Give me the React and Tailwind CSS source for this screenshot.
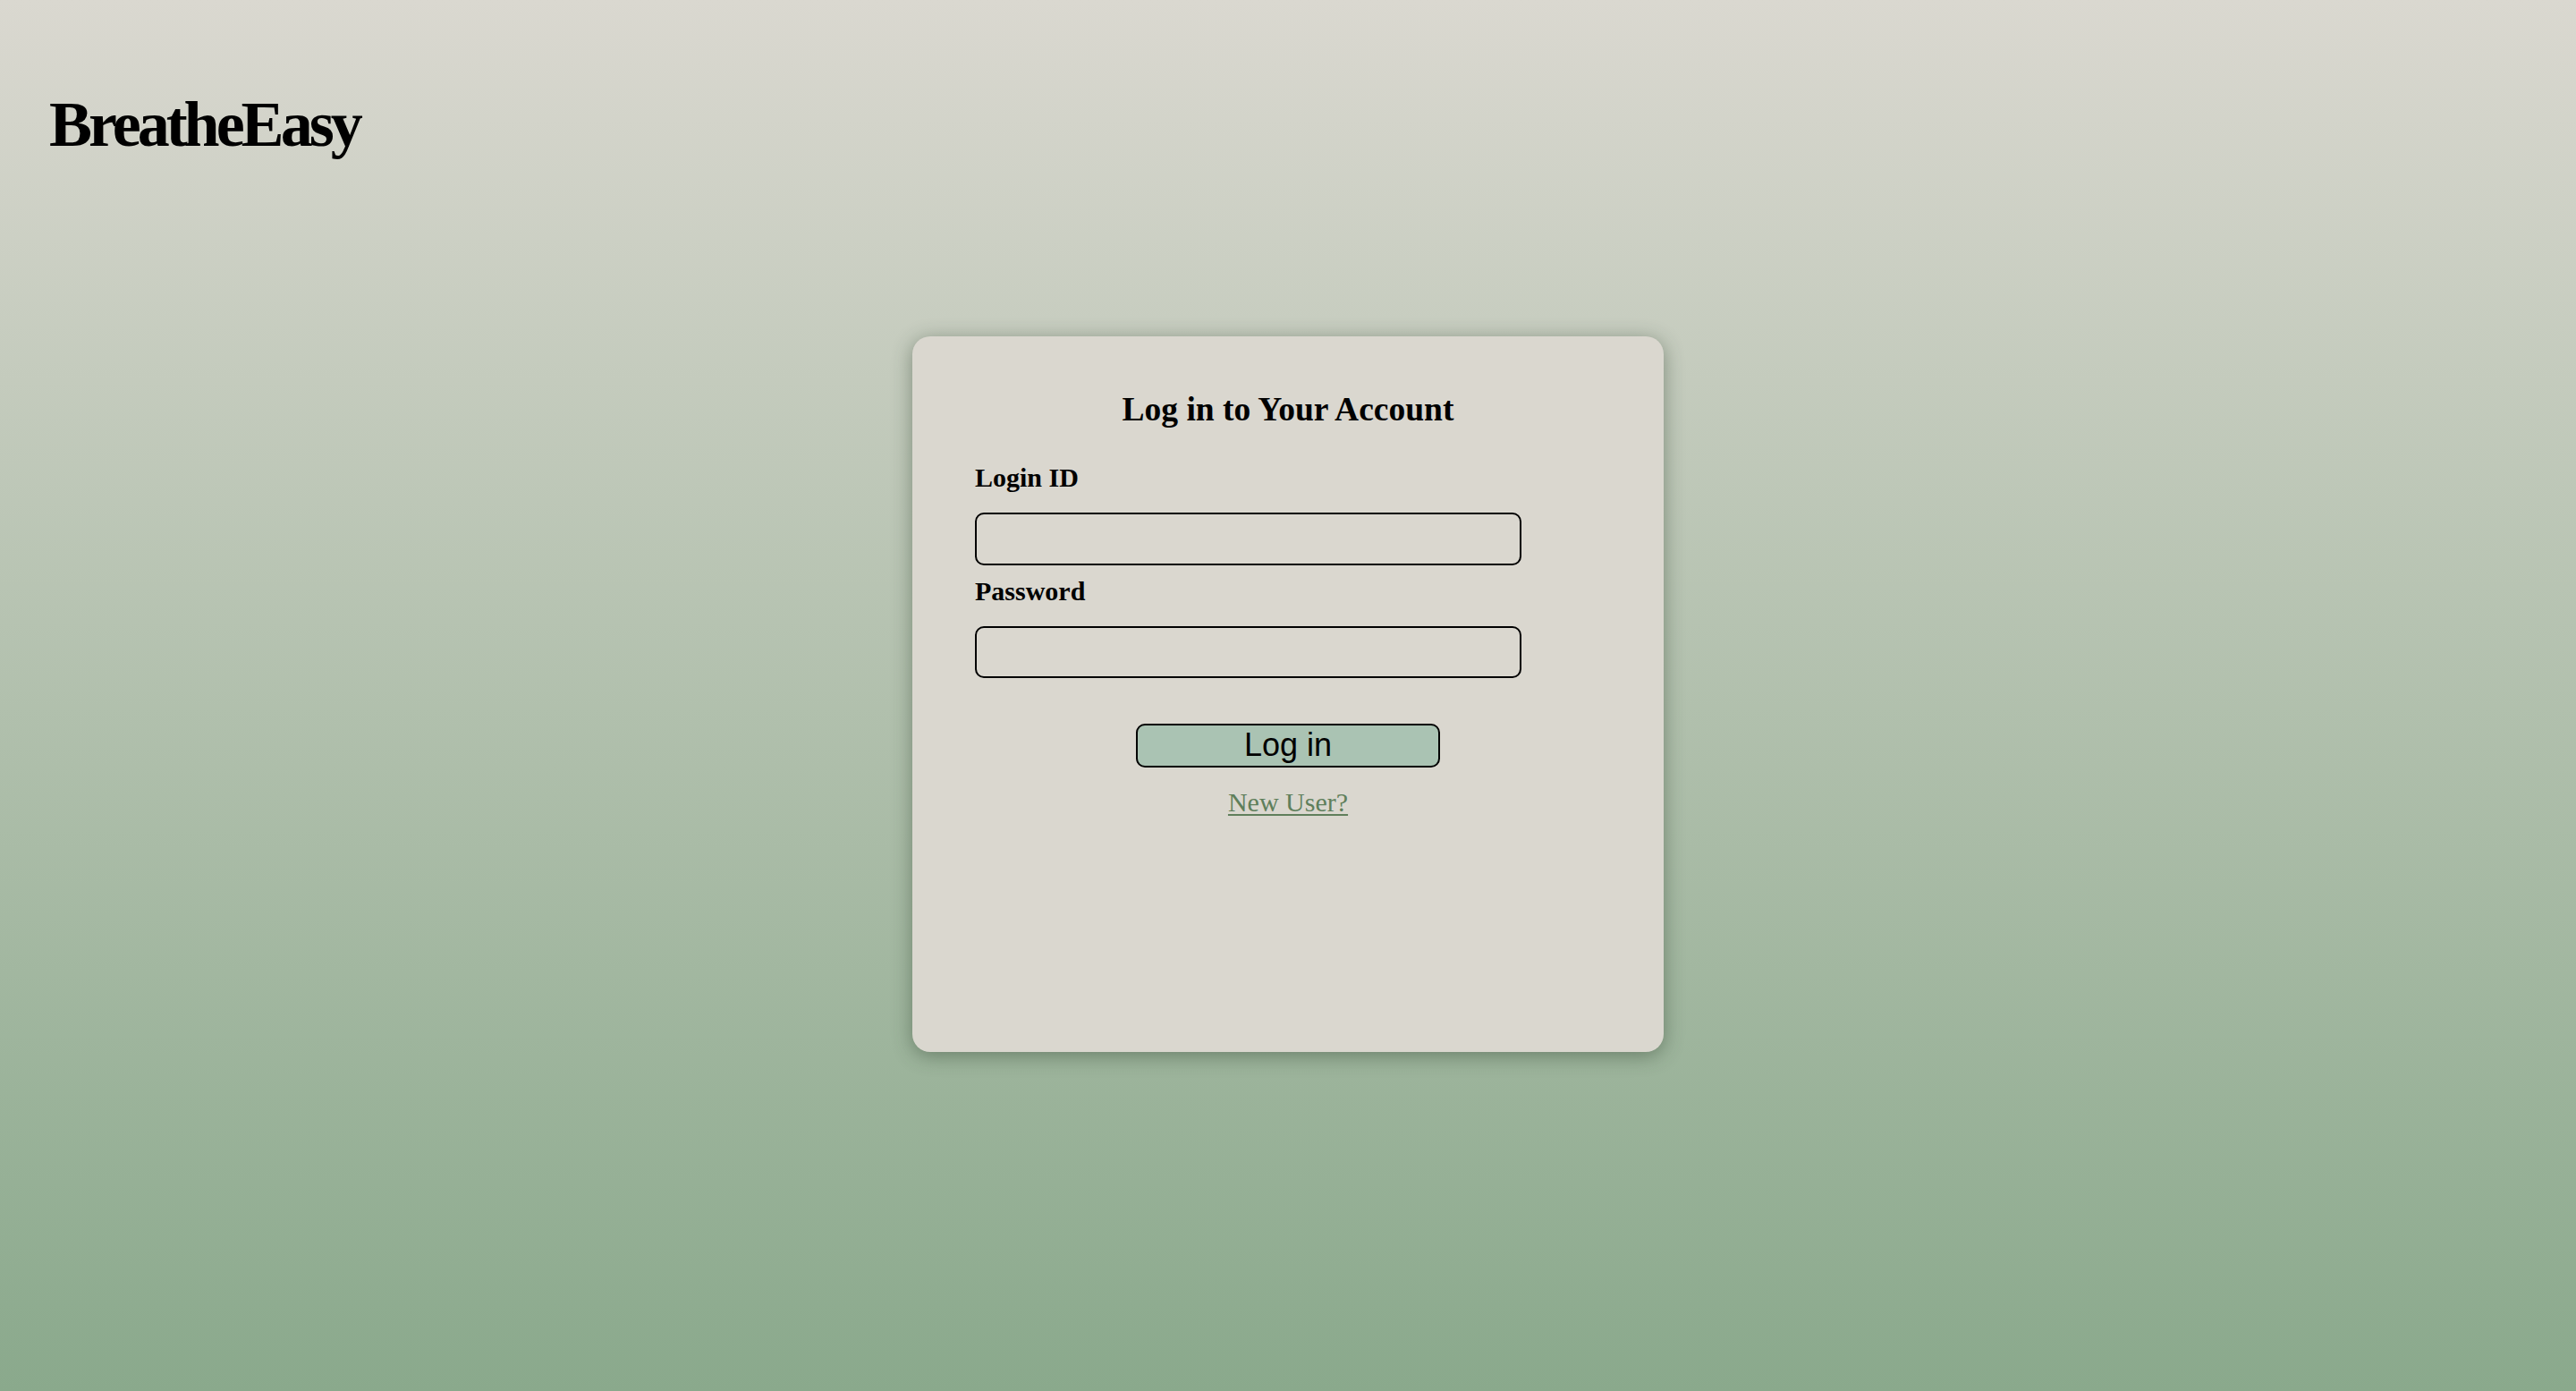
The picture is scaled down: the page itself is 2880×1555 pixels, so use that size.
import { useState } from "react";

function LoginCard() {
  const [loginId, setLoginId] = useState("");
  const [password, setPassword] = useState("");

  return (
    <div className="w-[840px] h-[800px] mt-[201px] self-center rounded-[20px] bg-[#dad7cf] shadow-[0_4px_22px_rgba(40,60,40,0.45)] pt-[63px] px-[70px] font-['Liberation_Serif',serif]">
      <h2 className="text-center font-bold text-[37.5px] leading-none">Log in to Your Account</h2>
      <form className="flex flex-col mt-[42px]" onSubmit={e => e.preventDefault()}>
        <label className="font-bold text-[30px] leading-none">Login ID</label>
        <input
          value={loginId}
          onChange={e => setLoginId(e.target.value)}
          className="mt-[24px] w-[611px] h-[59px] border-2 border-black rounded-[10px] bg-transparent px-3 text-[28px] outline-none"
        />
        <label className="mt-[14px] font-bold text-[30px] leading-none">Password</label>
        <input
          type="password"
          value={password}
          onChange={e => setPassword(e.target.value)}
          className="mt-[24px] w-[611px] h-[58px] border-2 border-black rounded-[10px] bg-transparent px-3 text-[28px] outline-none"
        />
        <button
          type="submit"
          className="mt-[51px] self-center w-[340px] h-[49px] border-2 border-black rounded-[10px] bg-[#aac3b3] font-['Liberation_Sans',sans-serif] text-[36px] leading-none text-black"
        >
          Log in
        </button>
        <a href="#" className="mt-[24px] self-center text-[30px] leading-none text-[#5f7f5b] underline decoration-2 underline-offset-[3px]">
          New User?
        </a>
      </form>
    </div>
  );
}

export default function App() {
  return (
    <div className="min-h-[1555px] flex flex-col bg-gradient-to-b from-[#dad8d0] to-[#8aa98c]">
      <header className="pt-[103px] pl-[55px]">
        <h1 className="font-['Liberation_Serif',serif] font-bold text-[72px] leading-none tracking-[-4px] text-black">
          BreatheEasy
        </h1>
      </header>
      <LoginCard />
    </div>
  );
}
